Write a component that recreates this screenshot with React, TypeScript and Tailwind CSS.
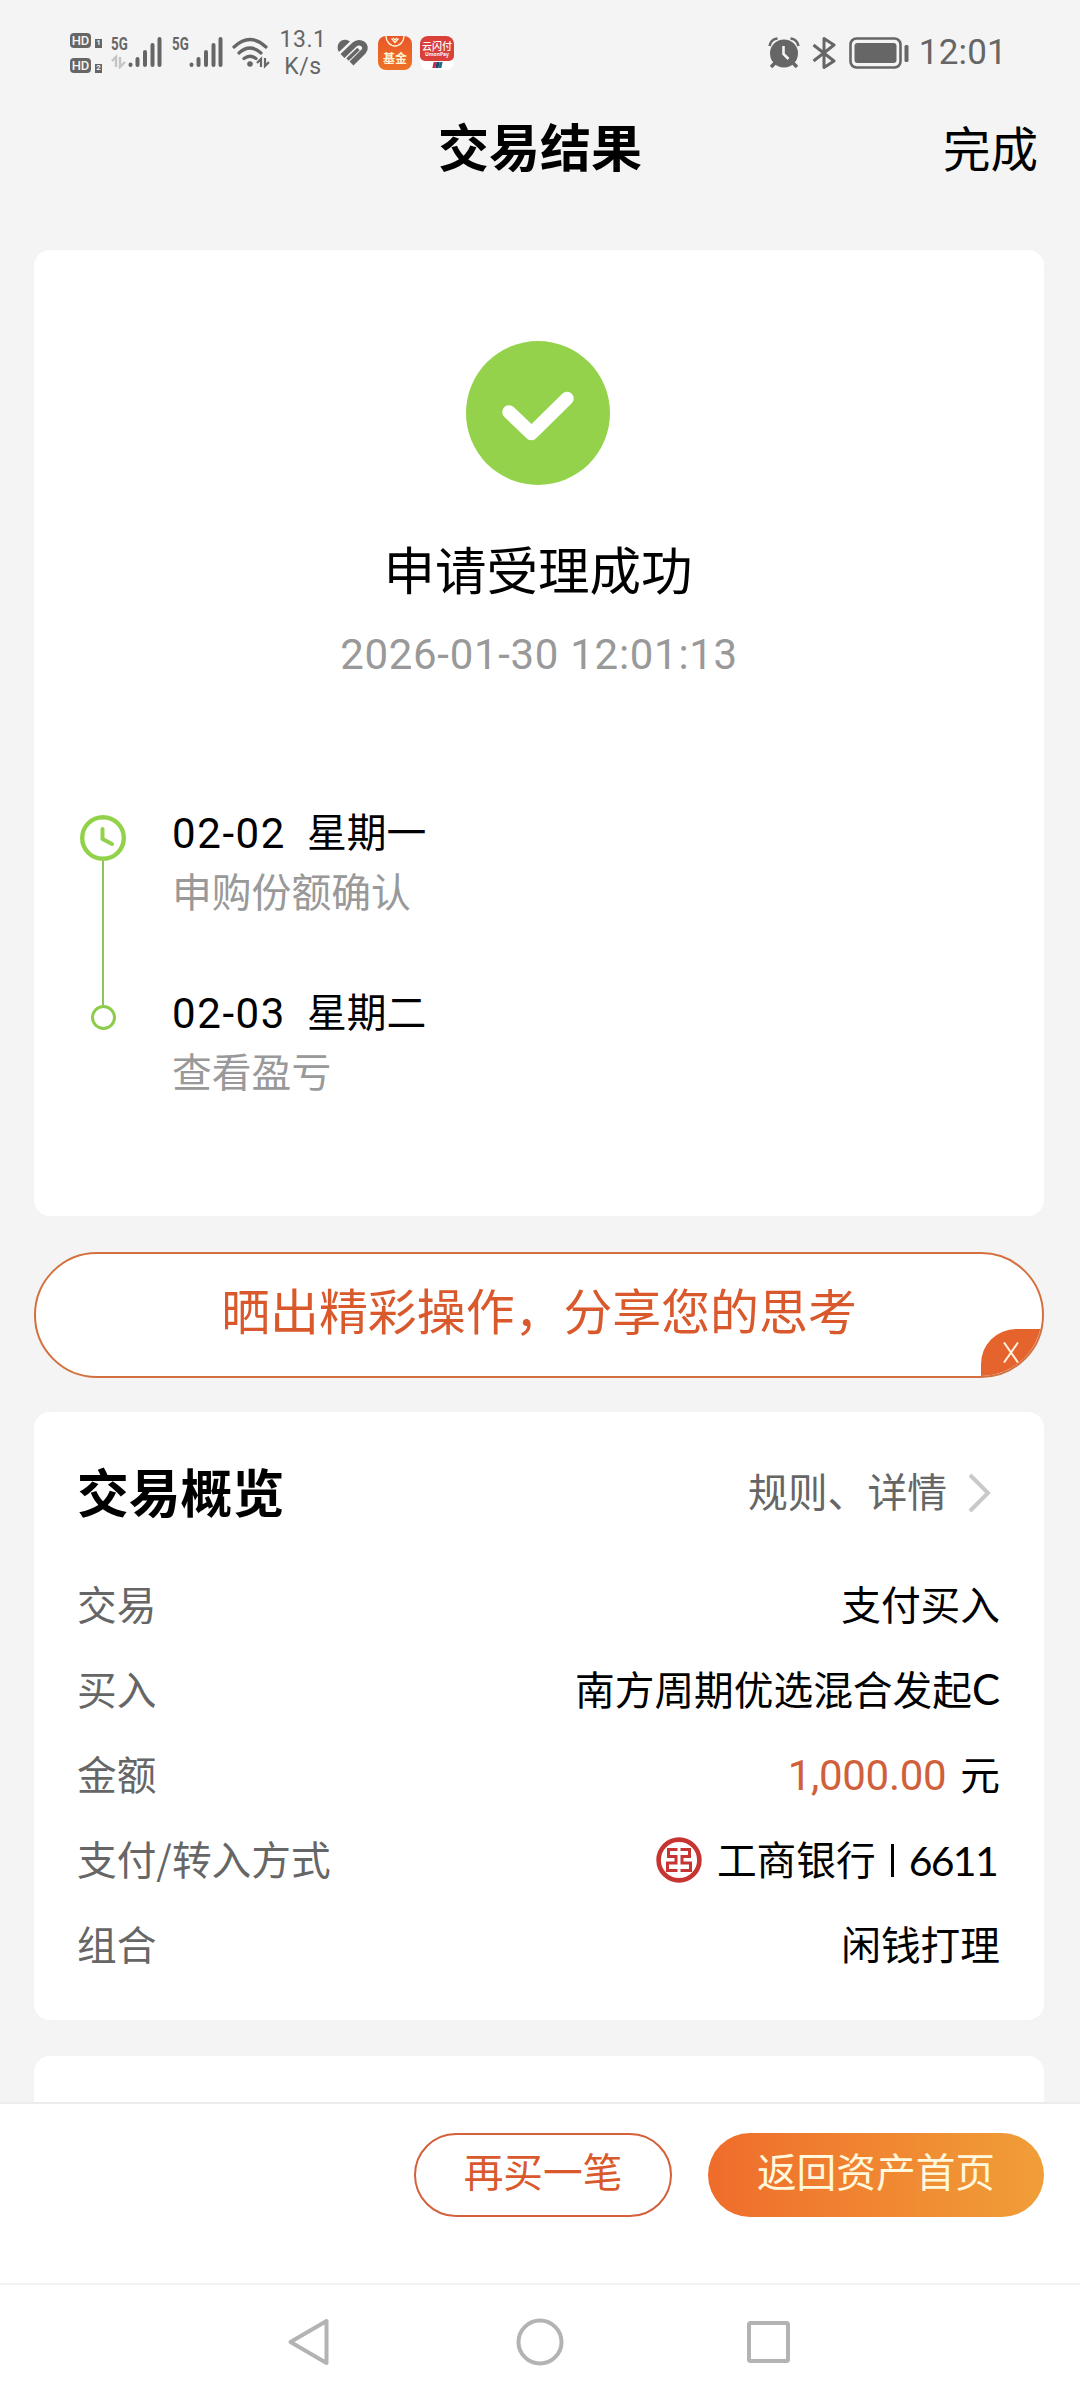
import type { ReactNode } from 'react';
import clsx from 'clsx';

interface Step {
  date: string;
  weekday: string;
  note: string;
}

interface DetailRow {
  label: string;
  value: ReactNode;
}

const steps: Step[] = [
  { date: '02-02', weekday: '星期一', note: '申购份额确认' },
  { date: '02-03', weekday: '星期二', note: '查看盈亏' },
];

const rows: DetailRow[] = [
  { label: '交易', value: <Zh>支付买入</Zh> },
  {
    label: '买入',
    value: (
      <>
        <Zh>南方周期优选混合发起</Zh>
        <span className="pb-[2px] font-['Lato'] text-[42px]">C</span>
      </>
    ),
  },
  {
    label: '金额',
    value: (
      <>
        <Digits className="mr-[14px] tracking-[-0.300px] text-[#d0603c]">1,000.00</Digits>
        <Zh>元</Zh>
      </>
    ),
  },
  {
    label: '支付/转入方式',
    value: (
      <>
        <BankLogo />
        <Zh>工商银行</Zh>
        <span className="ml-[15px] mr-[15px] h-[33px] w-[3px] bg-black" />
        <span className="mr-[3px] font-['Lato'] text-[41px] tracking-[-1.700px]">6611</span>
      </>
    ),
  },
  { label: '组合', value: <Zh>闲钱打理</Zh> },
];

// CJK glyphs sit low in their line box, so lift them level with the digits
function Zh({ children, className }: { children: ReactNode; className?: string }) {
  return <span className={clsx('pb-[6px]', className)}>{children}</span>;
}

function Digits({ children, className }: { children: ReactNode; className?: string }) {
  return <span className={clsx("font-['Roboto'] text-[42px]", className)}>{children}</span>;
}

function BankLogo() {
  return (
    <svg width="46" height="46" viewBox="0 0 46 46" className="mr-[15px]" fill="none" stroke="#c73532">
      <circle cx="23" cy="23" r="20.4" strokeWidth="4.6" />
      <path
        d="M21.500 12.500H12.500V19.500H20V26H11.500V33.500H21.500M24.500 12.500H33.500V19.500H26V26H34.500V33.500H24.500"
        strokeWidth="3"
      />
    </svg>
  );
}

function HdBadge({ sim }: { sim: string }) {
  return (
    <div className="flex items-end gap-[4px]">
      <span className="flex h-[15px] w-[21px] items-center justify-center rounded-[4px] bg-[#666] text-[13px] font-medium leading-none text-[#f4f4f4]">
        HD
      </span>
      <span className="flex h-[9px] w-[7px] items-center justify-center bg-[#666] text-[8px] font-bold leading-none text-[#f4f4f4]">
        {sim}
      </span>
    </div>
  );
}

function Signal({ data }: { data?: boolean }) {
  return (
    <div className="relative h-[33px] w-[51px]">
      <span className="absolute left-0 top-0 origin-left scale-x-[0.7] font-['Roboto'] text-[19px] font-bold leading-[15px]">
        5G
      </span>
      <svg width="51" height="33" viewBox="0 0 51 33" className="absolute left-0 top-0">
        {data && (
          <path d="M1 25L5 21V31M9 21V31L14 26" fill="none" stroke="#c4c4c4" strokeWidth="2.4" />
        )}
        <g stroke="#666" strokeWidth="4" strokeLinecap="round">
          <path d="M19.500 28.500V29M26.500 23V29M34 16V29M41.500 9V29M48.500 3V29" />
        </g>
      </svg>
    </div>
  );
}

function StatusBar() {
  return (
    <div className="flex h-[100px] shrink-0 items-center justify-between pl-[70px] pr-[73px] pt-[5px] text-[#666]">
      <div className="flex items-center">
        <div className="flex w-[41px] flex-col gap-[10px] font-['Roboto']">
          <HdBadge sim="1" />
          <HdBadge sim="2" />
        </div>
        <Signal data />
        <div className="w-[10px]" />
        <Signal />
        <svg width="38" height="34" viewBox="0 0 38 34" className="ml-[9px]" fill="none" stroke="#666">
          <g strokeWidth="3.2" strokeLinecap="round">
            <path d="M2 11Q18 -4 34 11" />
            <path d="M7 17Q18 7 29 17" />
            <path d="M12 22.500Q18 18 24 22.500" />
          </g>
          <circle cx="18" cy="28" r="2.800" fill="#666" stroke="none" />
          <path d="M25 27L29 23V31M33 22V30L37 26" strokeWidth="2.200" />
        </svg>
        <div className="ml-[9px] w-[48px] text-center font-['Roboto'] text-[23px] leading-[27px] tracking-[0.6px]">
          <div>13.1</div>
          <div>K/s</div>
        </div>
        <svg width="32" height="28" viewBox="0 0 32 28" className="ml-[10px]" fill="none" stroke="#666">
          <path d="M1.500 12.500C-2 4 6 -2.500 13 2.500L2.500 12.500Z" fill="#666" stroke="none" />
          <path d="M5.500 17L17.500 5.500C23 0.500 31.500 7 26.500 12.500L14.500 24.500" strokeWidth="5.600" />
          <path d="M10.500 20.500L21.500 10" strokeWidth="3.400" />
        </svg>
        <div className="relative ml-[9px] flex h-[34px] w-[34px] items-end justify-center overflow-hidden rounded-[8px] bg-gradient-to-b from-[#e8562a] to-[#ee7226]">
          <svg width="34" height="34" viewBox="0 0 34 34" className="absolute left-0 top-0" fill="none" stroke="#fff3d6">
            <path d="M8 0A9 10 0 0 0 26 0" strokeWidth="1.400" />
            <path d="M13.500 2.500L17 6.500L20.500 2.500M15 2L17 4L19 2" strokeWidth="1.200" />
          </svg>
          <span className="whitespace-nowrap pb-[6px] text-[12px] font-bold leading-[12px] text-[#fff3d6]">
            基金
          </span>
        </div>
        <div className="ml-[8px] flex h-[34px] w-[34px] flex-col items-center overflow-hidden rounded-[8px] bg-white">
          <div className="flex h-[25px] w-full shrink-0 flex-col items-center rounded-b-[5px] bg-[#d9403a] pt-[5px] text-white">
            <span className="whitespace-nowrap text-[10px] font-medium leading-[10px]">云闪付</span>
            <span className="text-[5px] font-bold leading-[6px]">UnionPay</span>
          </div>
          <div className="mt-[1px] flex -skew-x-12">
            <span className="h-[6px] w-[3px] bg-[#c8303c]" />
            <span className="h-[6px] w-[3px] bg-[#23406e]" />
            <span className="h-[6px] w-[3px] bg-[#1c7280]" />
          </div>
        </div>
      </div>

      <div className="flex items-center">
        <svg width="32" height="32" viewBox="0 0 32 32" fill="none" stroke="#666">
          <path d="M1.500 9Q3 2 9.500 1.500M30.500 9Q29 2 22.500 1.500" strokeWidth="2.600" />
          <path d="M7 26L3 30M25 26L29 30" strokeWidth="3.500" />
          <circle cx="16" cy="16.500" r="14" fill="#666" stroke="none" />
          <path d="M15.500 9V17L20.500 22" stroke="#f4f4f4" strokeWidth="2.600" />
        </svg>
        <svg width="24" height="34" viewBox="0 0 24 34" className="ml-[12px]" fill="none" stroke="#666">
          <path d="M1.500 9L22 25L12 31.500V2.500L22 9L1.500 25" strokeWidth="3" strokeLinejoin="round" />
        </svg>
        <svg width="60" height="34" viewBox="0 0 60 34" className="ml-[13px]">
          <rect x="1.500" y="2.500" width="50" height="29" rx="6" fill="none" stroke="#666" strokeWidth="2.600" />
          <rect x="5.500" y="7" width="42" height="20" rx="3" fill="#666" />
          <rect x="55.500" y="9" width="4" height="17" rx="1.500" fill="#666" />
        </svg>
        <span className="ml-[10px] font-['Roboto'] text-[35px] leading-none tracking-[0.2px]">12:01</span>
      </div>
    </div>
  );
}

function Header() {
  return (
    <div className="grid h-[98px] shrink-0 grid-cols-3 items-center px-[42px] pb-[7px] text-black">
      <div />
      <h1 className="text-center text-[51px] font-bold leading-none">交易结果</h1>
      <button className="justify-self-end pt-[2px] text-[47.500px] leading-none">完成</button>
    </div>
  );
}

function Timeline() {
  return (
    <div className="mt-[131px] flex pl-[46px]">
      <div className="flex w-[46px] flex-col items-center">
        <svg width="46" height="46" viewBox="0 0 46 46" fill="none" stroke="#92d24b">
          <circle cx="23" cy="23" r="20.800" strokeWidth="4.400" />
          <path d="M22.500 14V24L32 29" strokeWidth="4" strokeLinecap="round" strokeLinejoin="round" />
        </svg>
        <div className="h-[144px] w-[2px] bg-[#8cc55a]" />
        <div className="h-[25px] w-[25px] rounded-full border-[3px] border-[#8ccb4b]" />
      </div>
      <div className="ml-[46px] mt-[-12px] text-[39.800px]">
        {steps.map((step) => (
          <div key={step.date} className="h-[180px]">
            <div className="flex h-[60px] items-center text-black">
              <Digits className="mr-[21px] tracking-[1.600px]">{step.date}</Digits>
              <Zh>{step.weekday}</Zh>
            </div>
            <div className="flex h-[60px] items-center text-[#999]">
              <Zh className="pb-[5px]">{step.note}</Zh>
            </div>
          </div>
        ))}
      </div>
    </div>
  );
}

function ResultCard() {
  return (
    <div className="mt-[52px] h-[966px] rounded-[16px] bg-white pt-[91px]">
      <svg width="144" height="144" viewBox="0 0 144 144" className="ml-[432px] block">
        <circle cx="72" cy="72" r="72" fill="#93d24a" />
        <path
          d="M43 71L65.500 92.500L101 57.500"
          fill="none"
          stroke="#fff"
          strokeWidth="13.500"
          strokeLinecap="round"
          strokeLinejoin="round"
        />
      </svg>
      <div className="mt-[53px] pr-[2px] text-center text-[51.500px] leading-[60px] text-black">申请受理成功</div>
      <div className="mt-[26px] flex h-[60px] items-center justify-center text-[#999]">
        <Digits className="tracking-[0.700px]">2026-01-30 12:01:13</Digits>
      </div>
      <Timeline />
    </div>
  );
}

function ShareBanner() {
  return (
    <div className="relative mt-[36px] flex h-[126px] items-center justify-center overflow-hidden rounded-full border-2 border-[#d4703f] bg-white pb-[12px]">
      <span className="text-[48.900px] leading-none text-[#d9592c]">晒出精彩操作，分享您的思考</span>
      <button className="absolute bottom-0 right-0 flex h-[47px] w-[61px] items-center justify-center rounded-tl-[35px] bg-[#e5632d] pr-[2px]">
        <svg width="16" height="21" viewBox="0 0 16 21" stroke="#fff3e0" strokeWidth="2">
          <path d="M1 0.500L15 20.500M15 0.500L1 20.500" />
        </svg>
      </button>
    </div>
  );
}

function OverviewCard() {
  return (
    <div className="mt-[34px] h-[608px] rounded-[16px] bg-white pl-[43px] pr-[44px] pt-[41px]">
      <div className="flex h-[80px] items-center justify-between">
        <h2 className="pb-[4px] text-[51.800px] font-bold leading-none text-black">交易概览</h2>
        <button className="flex items-center text-[39.800px] leading-none text-[#666]">
          <Zh className="pb-[2px]">规则、详情</Zh>
          <svg width="24" height="40" viewBox="0 0 24 40" className="ml-[20px] mr-[9px]">
            <path d="M3 2L21 20L3 38" fill="none" stroke="#c9c9c9" strokeWidth="4" />
          </svg>
        </button>
      </div>
      <div className="mt-[30px]">
        {rows.map((row) => (
          <div key={row.label} className="flex h-[85px] items-center justify-between text-[39.700px]">
            <Zh className="text-[#666]">{row.label}</Zh>
            <span className="flex items-center whitespace-nowrap text-black">{row.value}</span>
          </div>
        ))}
      </div>
    </div>
  );
}

function ActionBar() {
  return (
    <div className="flex h-[181px] shrink-0 items-start justify-end gap-[36px] border-t-2 border-[#ececec] bg-white pr-[36px] pt-[29px]">
      <button className="h-[84px] w-[258px] rounded-full border-2 border-[#d4603c] pb-[10px] text-[39.700px] leading-none text-[#d9592c]">
        再买一笔
      </button>
      <button className="h-[84px] w-[336px] rounded-full bg-gradient-to-r from-[#ef6c2b] to-[#f09e38] pb-[10px] text-[39.700px] leading-none text-[#fff8dc]">
        返回资产首页
      </button>
    </div>
  );
}

function NavBar() {
  return (
    <div className="h-[117px] shrink-0 border-t-2 border-[#f3f3f3] bg-white">
      <svg width="1080" height="115" viewBox="0 0 1080 115" fill="none" stroke="#b3b3b3" strokeWidth="4">
        <path d="M326.500 36V78L290.500 57Z" strokeLinejoin="round" />
        <circle cx="540" cy="57" r="21.500" />
        <rect x="749" y="38" width="39" height="38" rx="1.500" />
      </svg>
    </div>
  );
}

export default function App() {
  return (
    <div className="flex h-[2400px] w-[1080px] flex-col overflow-hidden bg-[#f4f4f4] font-['Noto_Sans_CJK_SC',sans-serif]">
      <StatusBar />
      <Header />
      <main className="min-h-0 flex-1 overflow-hidden pl-[34px] pr-[36px]">
        <ResultCard />
        <ShareBanner />
        <OverviewCard />
        <div className="mt-[36px] h-[120px] rounded-[16px] bg-white" />
      </main>
      <ActionBar />
      <NavBar />
    </div>
  );
}
